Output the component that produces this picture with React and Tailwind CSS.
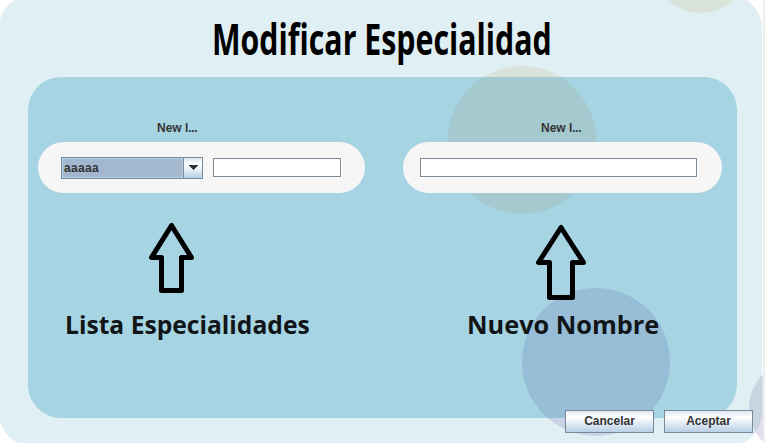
function Label({ children, className }) {
  return (
    <div className={`h-[16px] whitespace-nowrap font-['Liberation_Sans',Arial,sans-serif] text-[12px] leading-[16px] font-bold text-[#333333] ${className}`}>
      {children}
    </div>
  );
}

function TextField({ className }) {
  return (
    <div className={`h-[20px] border-r border-b border-white ${className}`}>
      <input className="block h-[19px] w-full border border-[#7a8a99] bg-white px-1 text-[12px] outline-none" />
    </div>
  );
}

function ComboBox() {
  return (
    <div className="flex h-[22px] w-[142px] border border-[#7a8a99] bg-[#b8cfe5]">
      <div className="m-px flex-1 bg-[#a3b8cf] pl-px font-['Liberation_Sans',Arial,sans-serif] text-[12px] leading-[18px] font-bold tracking-[0.33px] text-[#333333]">
        aaaaa
      </div>
      <div className="flex w-[19px] items-center justify-center border-l border-[#7a8a99] bg-linear-to-b from-[#dde8f3] via-white via-35% to-[#b8cfe5]">
        <svg width="10" height="5" viewBox="0 0 10 5" shapeRendering="crispEdges">
          <path d="M0 0H10L5 5Z" fill="#333333" />
        </svg>
      </div>
    </div>
  );
}

function Caption({ children, className }) {
  return (
    <div className={`h-[36px] origin-left font-['Open_Sans','Noto_Sans',sans-serif] text-[25px] leading-[36px] font-bold whitespace-nowrap text-[#111518] ${className}`}>
      {children}
    </div>
  );
}

function Button({ children }) {
  return (
    <button className="h-[23px] w-[89px] border border-[#7a8a99] bg-linear-to-b from-[#dde8f3] via-white via-30% to-[#b8cfe5] font-['Liberation_Sans',Arial,sans-serif] text-[12px] leading-[21px] font-bold text-[#333333]">
      {children}
    </button>
  );
}

export default function App() {
  return (
    <div className="relative h-[443px] w-[765px] overflow-hidden bg-white">
      <div className="absolute top-[360px] left-[749px] size-[96px] rounded-full bg-[#e3dfe9]" />
      <div className="absolute top-[-5.5px] left-[-1.5px] h-[451px] w-[763.5px] overflow-hidden rounded-[33px] bg-[#e0eff4]">
        <div className="absolute top-[-77.5px] left-[654.5px] size-[96px] rounded-full bg-[#dae3d9]" />
        <div className="absolute top-[365.5px] left-[750.5px] size-[96px] rounded-full bg-[#c8d4e1]" />
        <div className="absolute top-[71.5px] left-[449.5px] size-[148px] rounded-full bg-[#dae3d9]" />
        <div className="absolute top-[293.5px] left-[523.5px] size-[148px] rounded-full bg-[#c8d3e5]" />
      </div>
      <div className="absolute top-[77px] left-[28px] h-[340.5px] w-[709px] overflow-hidden rounded-[33px] bg-[#a6d4e2]">
        <div className="absolute top-[-11px] left-[420px] size-[148px] rounded-full bg-[#a4cad0]" />
        <div className="absolute top-[211px] left-[494px] size-[148px] rounded-full bg-[#97bdd7]" />
      </div>
      <div className="absolute top-0 right-0 h-full w-[2px] bg-[#eeeeee]" />

      <main className="relative flex h-full flex-col">
        <h1 className="flex h-[77px] justify-start pt-[9px] pl-[212px]">
          <span className="h-[60px] origin-left scale-x-[0.705] font-['Open_Sans',sans-serif] text-[43px] leading-[60px] font-bold whitespace-nowrap text-black">
            Modificar Especialidad
          </span>
        </h1>
        <div className="flex h-[333px] gap-[38px] pt-[43px] pl-[38px]">
          <section className="w-[327px]">
            <Label className="pl-[119px]">New l<span className="tracking-[-0.33px]">...</span></Label>
            <div className="mt-[6px] flex h-[51px] items-center gap-[10px] rounded-full bg-[#f6f6f6] pl-[23px]">
              <ComboBox />
              <TextField className="w-[129px]" />
            </div>
            <svg className="mt-[29px] ml-[109px]" width="50" height="72" viewBox="147 222 50 72" fill="none" stroke="black" strokeWidth="5" strokeLinejoin="round">
              <path d="M171.5 225.5L151.5 257.5H161.5V290.5H181.5V257.5H191.5Z" />
            </svg>
            <Caption className="mt-[12px] ml-[27px] scale-x-[0.985]">Lista Especialidades</Caption>
          </section>
          <section className="w-[318.5px]">
            <Label className="pl-[138px]">New l<span className="tracking-[-0.33px]">...</span></Label>
            <div className="mt-[6px] flex h-[51px] items-center rounded-full bg-[#f6f6f6] pl-[17px]">
              <TextField className="w-[278px]" />
            </div>
            <svg className="mt-[29px] ml-[130px]" width="56" height="80" viewBox="533 222 56 80" fill="none" stroke="black" strokeWidth="5" strokeLinejoin="round">
              <path d="M561 227.5L538.5 262.5H549.5V297.5H572.5V262.5H583.5Z" />
            </svg>
            <Caption className="mt-[4px] ml-[64px] scale-x-[1.012]">Nuevo Nombre</Caption>
          </section>
        </div>
        <footer className="flex justify-end gap-[10px] pr-[12px]">
          <Button>Cancelar</Button>
          <Button>Aceptar</Button>
        </footer>
      </main>
    </div>
  );
}
